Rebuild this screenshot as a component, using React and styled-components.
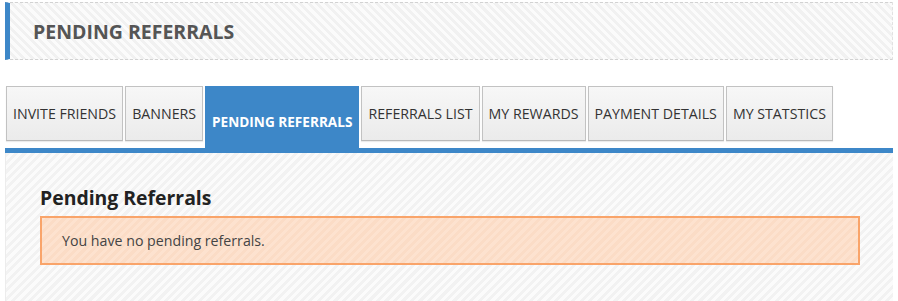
import React from 'react';
import styled, { createGlobalStyle } from 'styled-components';

const GlobalStyle = createGlobalStyle`
  body {
    margin: 0;
    background: #fff;
    font-family: "Open Sans", "Noto Sans", sans-serif;
  }
`;

const Page = styled.div`
  width: 888px;
  padding: 2px 0 0 5px;
`;

const PageHeader = styled.div`
  height: 56px;
  display: flex;
  align-items: center;
  padding-left: 23px;
  border-left: 5px solid #3d87c8;
  border-top: 1px dashed #d2d2d2;
  border-bottom: 1px dashed #d2d2d2;
  border-right: 1px dashed #e2e2e2;
  background: repeating-linear-gradient(
    45deg,
    #fbfbfb 0px,
    #fbfbfb 3px,
    #f1f1f1 3px,
    #f1f1f1 6px
  );
`;

const PageTitle = styled.h1`
  margin: 0;
  font-size: 19.5px;
  font-weight: 700;
  color: #555;
`;

const TabBar = styled.nav`
  display: flex;
  align-items: flex-start;
  gap: 2px;
  margin-top: 26px;
  padding-left: 1px;
  border-bottom: 5px solid #3d87c8;
`;

const Tab = styled.button`
  font-family: inherit;
  font-size: ${({ $active }) => ($active ? '13.6px' : '14.2px')};
  text-transform: uppercase;
  cursor: pointer;
  padding: ${({ $active }) => ($active ? '26px 6px 17px' : '18px 6px 17px')};
  border: 1px solid ${({ $active }) => ($active ? '#3d87c8' : '#c2c2c2')};
  border-bottom: ${({ $active }) => ($active ? 'none' : '1px solid #b9b9b9')};
  color: ${({ $active }) => ($active ? '#fff' : '#333')};
  font-weight: ${({ $active }) => ($active ? 700 : 400)};
  background: ${({ $active }) =>
    $active ? '#3d87c8' : 'linear-gradient(#f7f7f7, #ebebeb)'};
  line-height: 18px;
  box-shadow: ${({ $active }) => ($active ? 'none' : '0 1px 1px rgba(0,0,0,0.08)')};
`;

const Content = styled.section`
  height: 148px;
  box-sizing: border-box;
  padding: 32px 33px 0 34px;
  border-left: 1px solid #ececec;
  background: repeating-linear-gradient(
    -45deg,
    #fbfbfb 0px,
    #fbfbfb 3px,
    #f2f2f2 3px,
    #f2f2f2 6px
  );
`;

const SectionTitle = styled.h2`
  margin: 0 0 6px;
  font-size: 19.4px;
  font-weight: 700;
  color: #222;
  line-height: 25px;
`;

const Alert = styled.div`
  height: 45px;
  display: flex;
  align-items: center;
  padding-left: 20px;
  font-size: 14.2px;
  color: #444;
  border: 2px solid #f9a46a;
  background: repeating-linear-gradient(
    -45deg,
    #fde2cf 0px,
    #fde2cf 3px,
    #fbdcc6 3px,
    #fbdcc6 6px
  );
`;

const tabs = [
  'Invite Friends',
  'Banners',
  'Pending Referrals',
  'Referrals List',
  'My Rewards',
  'Payment Details',
  'My Statstics',
];

export default function App() {
  return (
    <Page>
      <GlobalStyle />
      <PageHeader>
        <PageTitle>PENDING REFERRALS</PageTitle>
      </PageHeader>
      <TabBar>
        {tabs.map((t) => (
          <Tab key={t} $active={t === 'Pending Referrals'}>
            {t}
          </Tab>
        ))}
      </TabBar>
      <Content>
        <SectionTitle>Pending Referrals</SectionTitle>
        <Alert>You have no pending referrals.</Alert>
      </Content>
    </Page>
  );
}
